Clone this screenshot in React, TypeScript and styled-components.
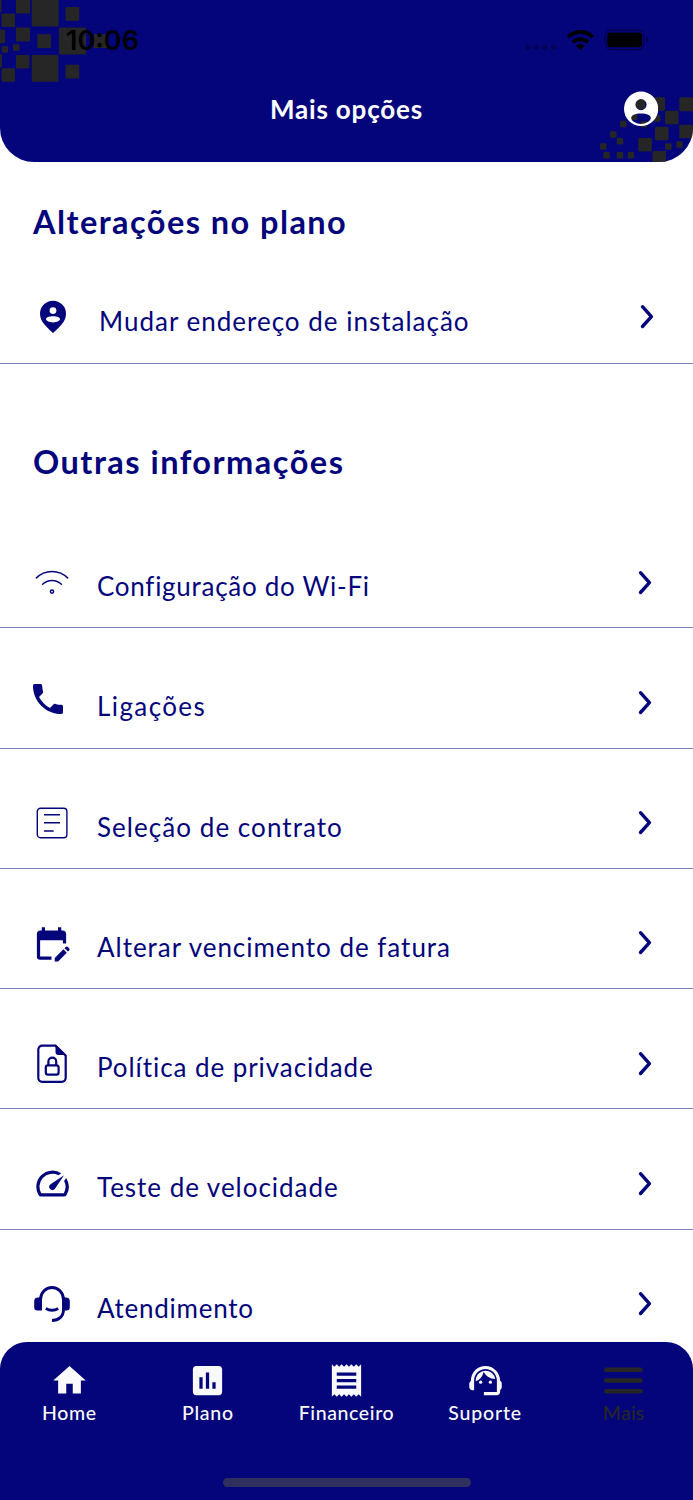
import React from "react";
import styled, { createGlobalStyle } from "styled-components";
import {
  MdAssessment,
  MdEditCalendar,
  MdHome,
  MdPhone,
  MdReceipt,
  MdSpeed,
  MdSupportAgent,
} from "react-icons/md";

const NAVY = "#04057b";
const CHARCOAL = "#262626";

const GlobalStyle = createGlobalStyle`
  * { box-sizing: border-box; }
  body { margin: 0; background: #fff; font-family: Lato, "Open Sans", sans-serif; color: ${NAVY}; }
  svg { display: block; flex: none; }
`;

const Screen = styled.div`
  display: flex;
  flex-direction: column;
  width: 693px;
  height: 1500px;
  overflow: hidden;
  background: #fff;
`;

const Header = styled.header`
  position: relative;
  flex: none;
  height: 162px;
  overflow: hidden;
  background: ${NAVY};
  border-radius: 0 0 34px 34px;
`;

const Pattern = styled.svg`
  position: absolute;
  inset: 0;
`;

const StatusBar = styled.div`
  position: relative;
  display: flex;
  align-items: center;
  justify-content: space-between;
  height: 80px;
  padding: 0 45px 0 66px;
`;

const Clock = styled.span`
  padding-top: 2px;
  font: 600 27px/32px Inter, sans-serif;
  letter-spacing: 0;
  color: #000;
`;

const TitleBar = styled.div`
  position: relative;
  display: grid;
  grid-template-columns: 1fr auto 1fr;
  align-items: center;
  height: 58px;
  padding: 0 35px;
`;

const Title = styled.h1<{ $track: number }>`
  grid-column: 2;
  margin: 0;
  font-size: 26px;
  line-height: 32px;
  font-weight: 700;
  letter-spacing: ${(p) => p.$track}px;
  color: #fff;
`;

const ProfileButton = styled.button`
  justify-self: end;
  padding: 0;
  border: 0;
  background: none;
`;

const Content = styled.main`
  flex: 1;
  min-height: 0;
  overflow: hidden;
`;

const Section = styled.section<{ $top: number; $gap: number }>`
  display: flex;
  flex-direction: column;
  gap: ${(p) => p.$gap}px;
  padding-top: ${(p) => p.$top}px;
`;

const SectionTitle = styled.h2<{ $track: number }>`
  margin: 0;
  padding-left: 33px;
  font-size: 32.5px;
  line-height: 40px;
  font-weight: 700;
  letter-spacing: ${(p) => p.$track}px;
`;

const List = styled.div`
  display: flex;
  flex-direction: column;
`;

const Row = styled.div<{ $first?: boolean }>`
  display: flex;
  align-items: center;
  flex: none;
  height: ${(p) => (p.$first ? 122 : 120.25)}px;
  padding: ${(p) => (p.$first ? "28px 39px 0 33px" : "30px 41px 0 32px")};
  border-bottom: 1px solid #7e7ebc;
`;

const IconSlot = styled.span<{ $wide?: boolean }>`
  display: flex;
  align-items: center;
  justify-content: center;
  width: 40px;
  height: 40px;
  margin-right: ${(p) => (p.$wide ? 26 : 25)}px;
`;

const Label = styled.span<{ $track: number; $low?: boolean }>`
  flex: 1;
  padding-top: ${(p) => (p.$low ? 9 : 7)}px;
  font-size: 26px;
  line-height: 32px;
  letter-spacing: ${(p) => p.$track}px;
  white-space: nowrap;
`;

const TabBar = styled.nav`
  display: flex;
  flex-direction: column;
  align-items: center;
  justify-content: space-between;
  flex: none;
  height: 158px;
  padding: 18px 0 13px;
  background: ${NAVY};
  border-radius: 27px 27px 0 0;
`;

const Tabs = styled.div`
  display: grid;
  grid-template-columns: repeat(5, 1fr);
  width: 100%;
`;

const Tab = styled.div<{ $active?: boolean }>`
  display: flex;
  flex-direction: column;
  align-items: center;
  color: ${(p) => (p.$active ? CHARCOAL : "#f9f9fb")};
`;

const TabIcon = styled.span`
  display: flex;
  align-items: center;
  justify-content: center;
  height: 41px;
`;

const TabLabel = styled.span<{ $track: number }>`
  font-size: 19.5px;
  line-height: 24px;
  font-weight: 500;
  letter-spacing: ${(p) => p.$track}px;
`;

const HomeIndicator = styled.div`
  width: 248px;
  height: 9px;
  border-radius: 5px;
  background: #30305f;
`;

// [x, y, size] of every square in the header decoration
const squares: [number, number, number][] = [
  [31.7, -0.5, 27], [59, 27.5, 27], [31.7, 55, 26.7],
  [16, -0.5, 14], [1.5, 13.5, 13.5], [16, 27.5, 14], [16, 55, 13.5],
  [1.5, 68.3, 13.5], [37.3, 34.3, 13.7], [65.6, 7, 13.7], [65.6, 64.7, 13.7],
  [93.3, 34.3, 13.7], [-8.5, 29.7, 13.5], [-12, -1, 13.5], [-11.5, 54, 13.5],
  [1.7, 46.3, 6.4], [13, 44.3, 6.4],
  [651.5, 97.3, 13.5], [679.3, 97.3, 14], [665, 110.7, 13.5],
  [655, 126.7, 13.5], [679.3, 124.7, 13.5], [638.3, 138, 13.5], [652.5, 151, 13.5],
  [634, 98, 11], [631, 113.5, 6.5],
  [620, 120.7, 6.5], [610, 131.3, 6.5], [616.7, 138, 6.5], [600, 143.3, 6.5],
  [603.3, 152, 6.5], [616.7, 152, 6.5], [627.7, 152, 6.5], [665, 143.3, 6.5],
  [676.3, 141.3, 6.5], [654, 115.3, 6.5], [640.7, 121, 6.5], [679.5, 153, 6.5],
];

const Decoration = () => (
  <Pattern width="693" height="162" viewBox="0 0 693 162" fill={CHARCOAL}>
    <defs>
      <filter id="soft" x="-5%" y="-5%" width="110%" height="110%">
        <feGaussianBlur stdDeviation="0.7" />
      </filter>
    </defs>
    <g filter="url(#soft)">
      {squares.map(([x, y, s]) => (
        <rect key={`${x}-${y}`} x={x} y={y} width={s} height={s} rx="1" />
      ))}
    </g>
  </Pattern>
);

const StatusIcons = () => (
  <svg width="123" height="24" viewBox="525 27.5 123 24">
    <g fill="#000" opacity="0.28">
      <circle cx="527.8" cy="46.7" r="2.8" />
      <circle cx="536.4" cy="46.7" r="2.8" />
      <circle cx="545" cy="46.7" r="2.8" />
      <circle cx="553.7" cy="46.7" r="2.8" />
    </g>
    <g fill="none" stroke="#000" strokeWidth="4">
      <path d="M568.2 36.600a17.300 17.300 0 0 1 24.400 0" />
      <path d="M572.9 41.800a10.800 10.800 0 0 1 15 0" />
    </g>
    <path d="M580.4 49.600l-4.400-4.300a6.400 6.400 0 0 1 8.800 0z" />
    <rect x="605.3" y="29.6" width="38.4" height="19.6" rx="5.6" fill="none" stroke="#000" strokeOpacity="0.4" strokeWidth="1.3" />
    <rect x="607.3" y="32" width="34.6" height="14.7" rx="3.2" />
    <path d="M646 36.3q2.2.9 2.2 3t-2.2 3z" opacity="0.4" />
  </svg>
);

const ProfileIcon = () => (
  <svg width="34" height="36" viewBox="0 0 34 36" fill="#fff" fillRule="evenodd">
    <path d="M17 .6a17 17 0 1 1 0 34.400a17 17.200 0 0 1 0-34.400zM17 8a5.600 5.600 0 1 0 0 11.200a5.600 5.600 0 0 0 0-11.200zM17 22.400c-6 0-9.800 1.700-9.800 4.600c0 3 5 5.900 9.800 5.900s9.800-2.900 9.800-5.900c0-2.900-3.800-4.600-9.800-4.600z" />
  </svg>
);

const Chevron = () => (
  <svg width="14" height="26" viewBox="0 0.4 14 26" fill="none" stroke={NAVY} strokeWidth="3.4" strokeLinecap="round" strokeLinejoin="round">
    <path d="M2.500 3.100l8.900 9.900l-8.900 9.900" />
  </svg>
);

const PinIcon = () => (
  <svg width="28" height="34" viewBox="0 0 28 34" fill={NAVY} fillRule="evenodd">
    <path d="M14 .8A13 13 0 0 0 1 13.800C1 22 8 27.500 14 33C20 27.500 27 22 27 13.800A13 13 0 0 0 14 .8zM14 7.200a3.400 3.400 0 1 1 0 6.800a3.400 3.400 0 0 1 0-6.800zM14 16.200c4.200 0 7 1.200 7 2.900s-2.800 3.300-7 3.300s-7-1.600-7-3.300s2.800-2.900 7-2.900z" />
  </svg>
);

const WifiIcon = () => (
  <svg width="36" height="28" viewBox="0 1.7 36 28" fill="none" stroke={NAVY} strokeWidth="1.5" strokeLinecap="round">
    <path d="M2.300 10.700a22 22 0 0 1 31.400 0M8.600 16.900a13.500 13.500 0 0 1 18.800 0" />
    <circle cx="18" cy="24.300" r="1.600" />
  </svg>
);

const PhoneIcon = styled(MdPhone)`
  margin: -8px 8px 0 0;
`;

const CalendarIcon = styled(MdEditCalendar)`
  margin-left: -2px;
`;

const ContractIcon = () => (
  <svg width="32" height="32" viewBox="0 0 32 32" fill="none" stroke={NAVY} strokeWidth="1.4">
    <rect x="1.300" y="1.300" width="29.600" height="29.400" rx="3.200" />
    <path d="M8 7.800h16M8 15.800h16M8 24h9.700" />
  </svg>
);

const PrivacyIcon = () => (
  <svg width="32" height="40" viewBox="0 0.4 32 40" fill="none" stroke={NAVY} strokeWidth="2.200">
    <path d="M19.500 2H6.300a4 4 0 0 0-4 4v28.200a4 4 0 0 0 4 4h19.400a4 4 0 0 0 4-4V12z" />
    <path d="M19.500 1.200V8.500a3 3 0 0 0 3 3H30.500z" fill={NAVY} stroke="none" />
    <rect x="9.800" y="21.700" width="12.800" height="9.400" rx="2.200" />
    <path d="M12.400 21.700v-3.800a3.900 3.900 0 0 1 7.800 0v3.800" />
  </svg>
);

const HeadsetIcon = () => (
  <svg width="38" height="38" viewBox="0 0 38 38" fill="none" stroke={NAVY} strokeWidth="2.900">
    <path d="M7.500 14.500a11.500 12 0 0 1 23 0v10c0 7-5 11-11.500 11" />
    <path d="M12.800 23.500q6.200 3.400 12.400 0" />
    <path d="M9 12.500H5a3.800 3.800 0 0 0-3.800 3.800v6a3.200 3.200 0 0 0 3.200 3.200H9zM29 12.500H33a3.800 3.800 0 0 1 3.800 3.800v6a3.200 3.200 0 0 1-3.200 3.200H29z" fill={NAVY} stroke="none" />
  </svg>
);

const MenuIcon = () => (
  <svg width="40" height="28" viewBox="1 0.5 40 28" fill="none" stroke="currentColor" strokeWidth="4.400" strokeLinecap="round">
    <path d="M3.200 3.200h34.400M3.200 14h34.400M3.200 24.700h34.400" />
  </svg>
);

const options = [
  { label: "Configuração do Wi-Fi", icon: <WifiIcon />, track: 0.72 },
  { label: "Ligações", icon: <PhoneIcon size={40} />, track: 1.4 },
  { label: "Seleção de contrato", icon: <ContractIcon />, track: 1.05 },
  { label: "Alterar vencimento de fatura", icon: <CalendarIcon size={39} />, track: 0.98 },
  { label: "Política de privacidade", icon: <PrivacyIcon />, track: 0.93 },
  { label: "Teste de velocidade", icon: <MdSpeed size={39} />, track: 0.97 },
  { label: "Atendimento", icon: <HeadsetIcon />, track: 0.75 },
];

const tabs = [
  { label: "Home", icon: <MdHome size={39} />, track: 0.6 },
  { label: "Plano", icon: <MdAssessment size={39} />, track: 0.7 },
  { label: "Financeiro", icon: <MdReceipt size={39} />, track: 0.62 },
  { label: "Suporte", icon: <MdSupportAgent size={39} />, track: 0.8 },
  { label: "Mais", icon: <MenuIcon />, track: 0.2, active: true },
];

export default function App() {
  return (
    <Screen>
      <GlobalStyle />
      <Header>
        <Decoration />
        <StatusBar>
          <Clock>10:06</Clock>
          <StatusIcons />
        </StatusBar>
        <TitleBar>
          <Title $track={0.8}>Mais opções</Title>
          <ProfileButton aria-label="Perfil">
            <ProfileIcon />
          </ProfileButton>
        </TitleBar>
      </Header>
      <Content>
        <Section $top={40} $gap={0}>
          <SectionTitle $track={1.44}>Alterações no plano</SectionTitle>
          <List>
            <Row $first>
              <IconSlot $wide>
                <PinIcon />
              </IconSlot>
              <Label $track={1} $low>Mudar endereço de instalação</Label>
              <Chevron />
            </Row>
          </List>
        </Section>
        <Section $top={78} $gap={26}>
          <SectionTitle $track={1.48}>Outras informações</SectionTitle>
          <List>
            {options.map((o) => (
              <Row key={o.label}>
                <IconSlot>{o.icon}</IconSlot>
                <Label $track={o.track}>{o.label}</Label>
                <Chevron />
              </Row>
            ))}
          </List>
        </Section>
      </Content>
      <TabBar>
        <Tabs>
          {tabs.map((t) => (
            <Tab key={t.label} $active={t.active}>
              <TabIcon>{t.icon}</TabIcon>
              <TabLabel $track={t.track}>{t.label}</TabLabel>
            </Tab>
          ))}
        </Tabs>
        <HomeIndicator />
      </TabBar>
    </Screen>
  );
}
